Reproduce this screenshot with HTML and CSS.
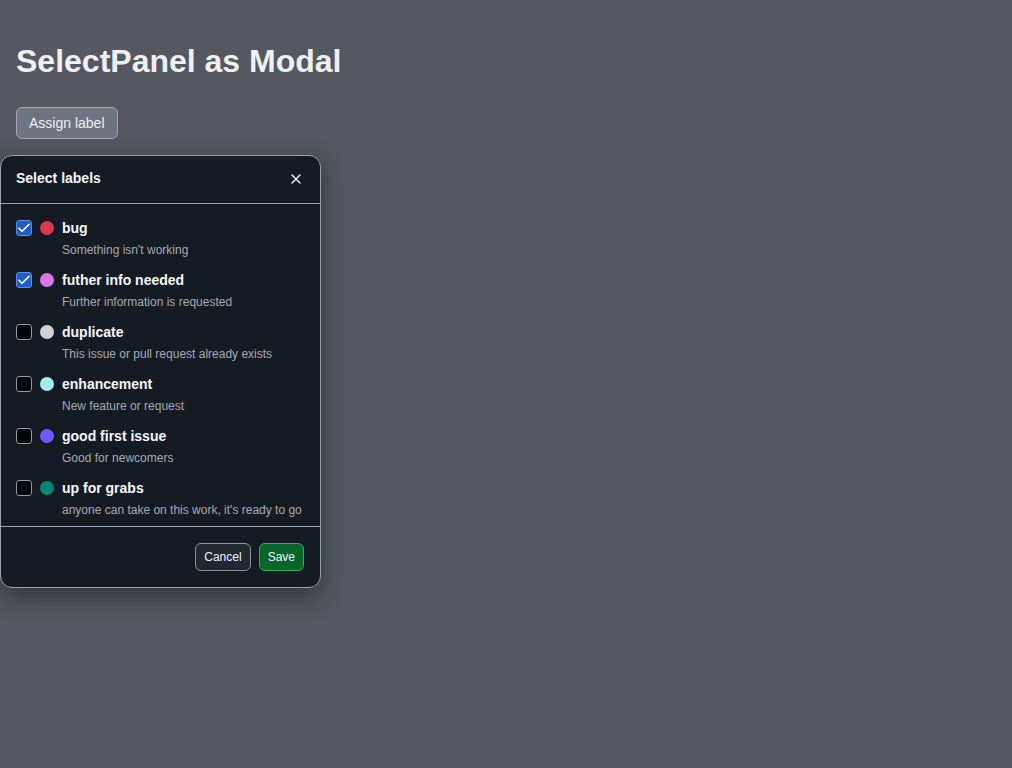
FILE: index.html
```html
<!DOCTYPE html>
<html>
<head>
<meta charset="utf-8">
<link rel="stylesheet" href="styles.css">
</head>
<body>
<main class="page">
  <h1 class="title">SelectPanel as Modal</h1>
  <button class="btn-assign">Assign label</button>
</main>
<div class="dialog">
  <div class="dialog-header">
    <h2 class="dialog-title">Select labels</h2>
    <button class="close" aria-label="Close">
      <svg width="16" height="16" viewBox="0 0 16 16"><path d="M4 4l8 8M12 4l-8 8" stroke="#e6edf3" stroke-width="1.5" stroke-linecap="round" fill="none"/></svg>
    </button>
  </div>
  <ul class="list">
    <li class="item">
      <span class="cb checked"><svg width="14" height="14" viewBox="0 0 14 14"><path d="M2 7.2l3 3L12 3.4" stroke="#fff" stroke-width="1.6" fill="none" stroke-linecap="round" stroke-linejoin="round"/></svg></span>
      <span class="dot" style="background:#d73a4a"></span>
      <div class="text"><div class="name">bug</div><div class="desc">Something isn't working</div></div>
    </li>
    <li class="item">
      <span class="cb checked"><svg width="14" height="14" viewBox="0 0 14 14"><path d="M2 7.2l3 3L12 3.4" stroke="#fff" stroke-width="1.6" fill="none" stroke-linecap="round" stroke-linejoin="round"/></svg></span>
      <span class="dot" style="background:#d876e3"></span>
      <div class="text"><div class="name">futher info needed</div><div class="desc">Further information is requested</div></div>
    </li>
    <li class="item">
      <span class="cb"></span>
      <span class="dot" style="background:#cfd3d7"></span>
      <div class="text"><div class="name">duplicate</div><div class="desc">This issue or pull request already exists</div></div>
    </li>
    <li class="item">
      <span class="cb"></span>
      <span class="dot" style="background:#a2eeef"></span>
      <div class="text"><div class="name">enhancement</div><div class="desc">New feature or request</div></div>
    </li>
    <li class="item">
      <span class="cb"></span>
      <span class="dot" style="background:#7057ff"></span>
      <div class="text"><div class="name">good first issue</div><div class="desc">Good for newcomers</div></div>
    </li>
    <li class="item">
      <span class="cb"></span>
      <span class="dot" style="background:#008672"></span>
      <div class="text"><div class="name">up for grabs</div><div class="desc">anyone can take on this work, it's ready to go</div></div>
    </li>
  </ul>
  <div class="dialog-footer">
    <button class="btn btn-cancel">Cancel</button>
    <button class="btn btn-save">Save</button>
  </div>
</div>
</body>
</html>
```
FILE: styles.css
```css
html, body {
  margin: 0;
  padding: 0;
  background: #555860;
  font-family: "Liberation Sans", Arial, sans-serif;
  color: #eef0f3;
}
.page {
  padding: 16px;
}
.title {
  margin: 26px 0 27px;
  font-size: 32px;
  line-height: 38px;
  font-weight: 700;
  color: #eef0f3;
}
.btn-assign {
  display: block;
  height: 32px;
  padding: 0 12px;
  background: #6e7480;
  border: 1px solid #a3a8b0;
  border-radius: 6px;
  color: #eef0f3;
  font-family: inherit;
  font-size: 14px;
}
.dialog {
  position: absolute;
  left: 0;
  top: 155px;
  width: 321px;
  box-sizing: border-box;
  background: #151b23;
  border: 1px solid #9ba1a9;
  border-radius: 12px;
  box-shadow: 0 8px 24px rgba(1,4,9,0.45);
  color: #f0f6fc;
}
.dialog-header {
  display: flex;
  align-items: flex-start;
  justify-content: space-between;
  height: 48px;
  box-sizing: border-box;
  padding: 12px 8px 0 15px;
  border-bottom: 1px solid #9ba1a9;
}
.dialog-title {
  margin: 0;
  font-size: 14px;
  line-height: 20px;
  font-weight: 700;
}
.close {
  width: 32px;
  height: 32px;
  display: flex;
  align-items: center;
  justify-content: center;
  background: none;
  border: none;
  padding: 0;
  margin-top: -5px;
}
.list {
  list-style: none;
  margin: 0;
  padding: 8px 0 2px;
}
.item {
  display: flex;
  align-items: flex-start;
  height: 52px;
  padding: 0 15px;
  box-sizing: border-box;
}
.cb {
  width: 16px;
  height: 16px;
  box-sizing: border-box;
  border: 1px solid #8f96a0;
  border-radius: 3px;
  background: #010409;
  margin-top: 8px;
  display: flex;
  align-items: center;
  justify-content: center;
  flex: none;
}
.cb.checked {
  background: #1f5bc9;
  border-color: #5b8fe6;
}
.dot {
  width: 14px;
  height: 14px;
  border-radius: 50%;
  margin: 9px 8px 0 8px;
  flex: none;
}
.text {
  display: flex;
  flex-direction: column;
}
.name {
  font-size: 14px;
  font-weight: 700;
  line-height: 20px;
  margin-top: 6px;
  color: #f6f8fa;
}
.desc {
  font-size: 12px;
  line-height: 16px;
  margin-top: 4px;
  color: #a4abb5;
}
.dialog-footer {
  display: flex;
  justify-content: flex-end;
  gap: 8px;
  padding: 16px 16px 16px;
  border-top: 1px solid #9ba1a9;
}
.btn {
  height: 28px;
  padding: 0 8px;
  border-radius: 6px;
  font-family: inherit;
  font-size: 12px;
  color: #f0f6fc;
}
.btn-cancel {
  background: #212830;
  border: 1px solid #8b929c;
}
.btn-save {
  background: #08662a;
  border: 1px solid #2fb34f;
}
```
